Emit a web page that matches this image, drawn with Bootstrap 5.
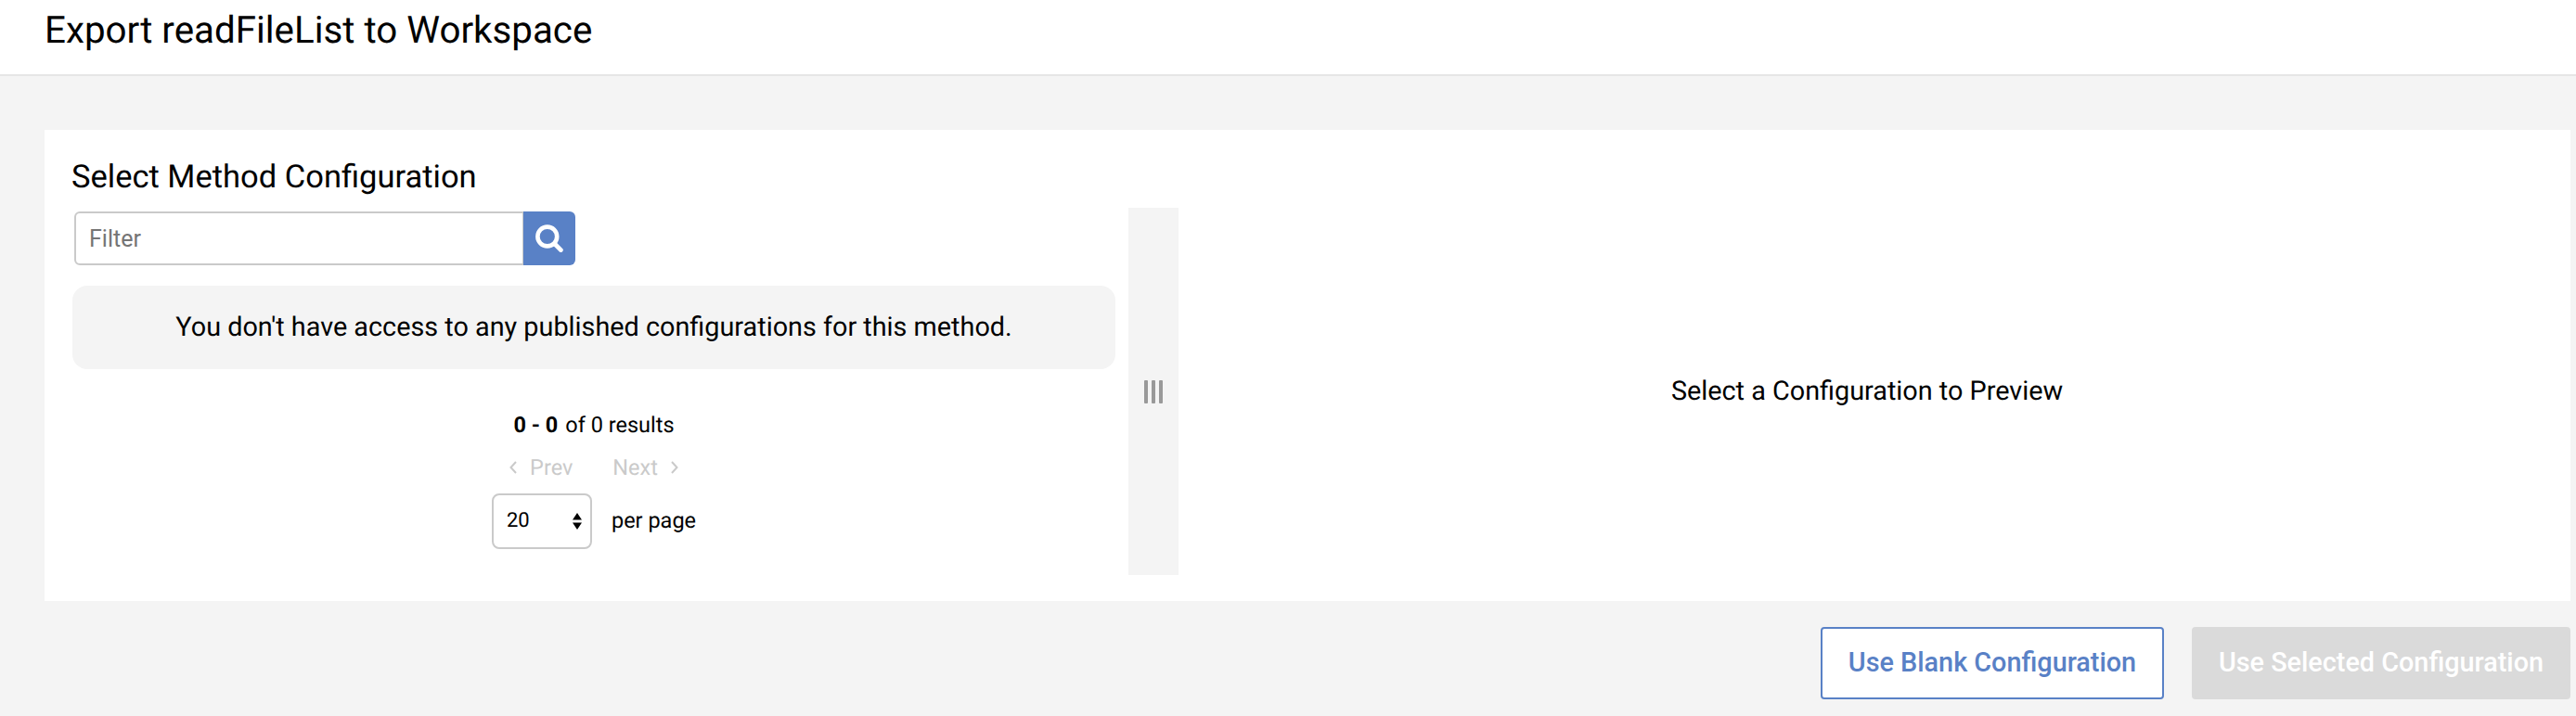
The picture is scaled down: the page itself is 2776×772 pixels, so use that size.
<!DOCTYPE html>
<html lang="en">
<head>
    <meta charset="UTF-8">
    <meta name="viewport" content="width=device-width, initial-scale=1.0">
    <title>Export to Workspace</title>
    <!-- Bootstrap CSS -->
    <link href="https://cdn.jsdelivr.net/npm/bootstrap@5.3.2/dist/css/bootstrap.min.css" rel="stylesheet">
    <style>
        body {
            font-family: Roboto, "Liberation Sans", sans-serif;
            font-size: 28.8px;
            color: #000;
            background: #f4f4f4;
            text-rendering: geometricPrecision;
        }
        .page-header {
            height: 82px;
            padding-left: 48px;
            border-bottom: 2px solid #e6e6e6;
        }
        .page-header h1 {
            font-size: 40.32px;
            font-weight: 400;
            line-height: 65px;
        }
        .page-main { padding: 58px 6px 0 48px; }
        .config-panel {
            height: 508px;
            padding: 28px 16px 28px 30px;
        }
        .config-panel h2 {
            font-size: 34.5px;
            font-weight: 400;
            line-height: 46px;
            margin: 0 0 10px -1px;
        }
        .split-row { height: 396px; }
        .config-list {
            width: 1124px;
            margin-right: 14px;
            padding-top: 4px;
        }
        .filter-group {
            width: 540px;
            height: 58px;
            margin-left: 2px;
        }
        .filter-group .form-control {
            font-size: 25px;
            padding: 2px 14px 0;
            border: 2px solid #cacaca;
            border-radius: 6px 0 0 6px;
        }
        .filter-group .form-control::placeholder { color: #757575; }
        .filter-group .btn {
            width: 56px;
            padding: 0;
            border: 0;
            border-radius: 0 6px 6px 0;
            background: #5981c6;
        }
        .empty-message {
            height: 90px;
            margin-top: 22px;
            padding-top: 2px;
            border-radius: 16px;
            background: #f4f4f4;
        }
        .pager {
            margin-top: 42px;
            font-size: 23.5px;
            line-height: 36px;
            gap: 10px;
        }
        .pager-nav { color: #cacaca; }
        .pager-nav .prev { margin: 0 43px 0 14px; }
        .pager-nav .next { margin-right: 14px; }
        .page-size {
            width: 108px;
            height: 60px;
            padding: 0 9px 0 14px;
            font-size: 22px;
            border: 2px solid #cacaca;
            border-radius: 8px;
        }
        .per-page {
            margin-left: 21px;
            padding-bottom: 3px;
        }
        .splitter {
            width: 54px;
            background: #f4f4f4;
            gap: 4px;
        }
        .splitter span {
            width: 4px;
            height: 25px;
            border-radius: 1px;
            background: #999;
        }
        .preview-pane { padding-top: 2px; }
        .actions {
            margin-top: 28px;
            gap: 30px;
        }
        .actions .btn {
            height: 78px;
            padding: 0;
            font-size: 28.8px;
            font-weight: 500;
            border: 2px solid #5981c6;
            border-radius: 4px;
        }
        .btn-blank {
            width: 370px;
            color: #5981c6;
            background: #fff;
        }
        .actions .btn-selected {
            width: 408px;
            color: #fff;
            background: #dadada;
            border-color: #dadada;
            opacity: 1;
        }
    </style>
</head>
<body>
    <header class="page-header bg-white">
        <h1 class="m-0">Export readFileList to Workspace</h1>
    </header>

    <main class="page-main">
        <section class="config-panel bg-white">
            <h2>Select Method Configuration</h2>
            <div class="split-row d-flex">
                <div class="config-list flex-shrink-0">
                    <div class="filter-group input-group flex-nowrap">
                        <input type="text" class="form-control" placeholder="Filter" aria-label="Filter">
                        <button type="button" class="btn d-flex align-items-center justify-content-center" aria-label="Search">
                            <svg width="30" height="30" viewBox="0 0 30 30" fill="none" stroke="#fff" stroke-linecap="round">
                                <circle cx="12.8" cy="13" r="10.4" stroke-width="4.6"/>
                                <path d="M20.8 21l6.6 6.6" stroke-width="4.8"/>
                            </svg>
                        </button>
                    </div>

                    <div class="empty-message d-flex align-items-center justify-content-center">
                        You don't have access to any published configurations for this method.
                    </div>

                    <div class="pager d-flex flex-column align-items-center">
                        <div><b>0 - 0</b><span class="ms-2">of 0 results</span></div>
                        <div class="pager-nav d-flex align-items-center">
                            <svg width="8" height="14" viewBox="0 0 8 14" fill="none" stroke="currentColor" stroke-width="2"><path d="M7 1L1.5 7L7 13"/></svg>
                            <span class="prev">Prev</span>
                            <span class="next">Next</span>
                            <svg width="8" height="14" viewBox="0 0 8 14" fill="none" stroke="currentColor" stroke-width="2"><path d="M1 1L6.5 7L1 13"/></svg>
                        </div>
                        <div class="d-flex align-items-center">
                            <div class="page-size d-flex align-items-center justify-content-between">
                                <span>20</span>
                                <svg width="10" height="18" viewBox="0 0 10 18"><path d="M5 0L10 7.5H0zM5 18L0 10.5H10z"/></svg>
                            </div>
                            <span class="per-page">per page</span>
                        </div>
                    </div>
                </div>

                <div class="splitter d-flex flex-shrink-0 align-items-center justify-content-center">
                    <span></span><span></span><span></span>
                </div>

                <div class="preview-pane flex-grow-1 d-flex align-items-center justify-content-center">
                    Select a Configuration to Preview
                </div>
            </div>
        </section>

        <div class="actions d-flex justify-content-end">
            <button type="button" class="btn btn-blank">Use Blank Configuration</button>
            <button type="button" class="btn btn-selected" disabled>Use Selected Configuration</button>
        </div>
    </main>

    <!-- Bootstrap JS -->
    <script src="https://cdn.jsdelivr.net/npm/bootstrap@5.3.2/dist/js/bootstrap.bundle.min.js"></script>
</body>
</html>
